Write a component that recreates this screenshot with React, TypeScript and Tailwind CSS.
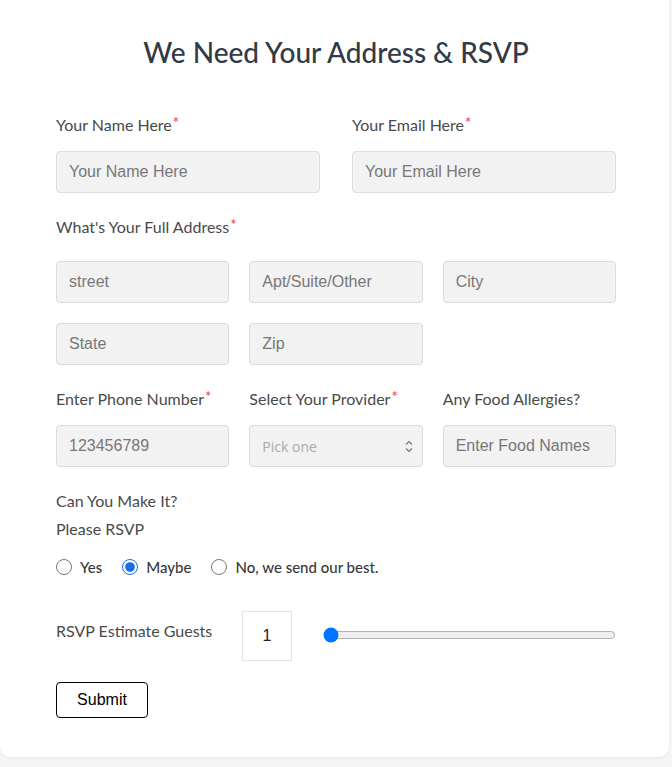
import { useState } from "react";

const inputCls =
  "h-[42px] w-full rounded-[4px] border border-[#dcdcdc] bg-[#f2f2f2] px-3 text-[16px] text-[#555] placeholder:text-[#777] outline-none font-['Liberation_Sans',Arial,sans-serif]";

function Label({ text, required }: { text: string; required?: boolean }) {
  return (
    <label className="block text-[16px] leading-[20px] text-[#4a4a4a] font-['Lato',sans-serif]">
      {text}
      {required && <sup className="relative -top-[3px] ml-[1px] text-[15px] text-[#e53935]">*</sup>}
    </label>
  );
}

export default function App() {
  const [rsvp, setRsvp] = useState("maybe");
  const [guests, setGuests] = useState(1);

  return (
    <div className="min-h-[767px] bg-[#f5f5f5] font-['Lato',sans-serif]">
      <div className="mr-[3px] rounded-b-[10px] bg-white pb-[39px] pl-[56px] pr-[53px] pt-[34px] shadow-[0_1px_3px_rgba(0,0,0,0.06)]">
        <h1 className="text-center text-[28px] font-medium leading-[36px] text-[#323a47]">
          We Need Your Address &amp; RSVP
        </h1>

        <div className="mt-[45px] grid grid-cols-2 gap-x-[32px]">
          <div>
            <Label text="Your Name Here" required />
            <input className={inputCls + " mt-[16px]"} placeholder="Your Name Here" />
          </div>
          <div>
            <Label text="Your Email Here" required />
            <input className={inputCls + " mt-[16px]"} placeholder="Your Email Here" />
          </div>
        </div>

        <div className="mt-[24px]">
          <Label text="What's Your Full Address" required />
          <div className="mt-[24px] grid grid-cols-3 gap-x-[20px] gap-y-[20px]">
            <input className={inputCls} placeholder="street" />
            <input className={inputCls} placeholder="Apt/Suite/Other" />
            <input className={inputCls} placeholder="City" />
            <input className={inputCls} placeholder="State" />
            <input className={inputCls} placeholder="Zip" />
          </div>
        </div>

        <div className="mt-[24px] grid grid-cols-3 gap-x-[20px]">
          <div>
            <Label text="Enter Phone Number" required />
            <input className={inputCls + " mt-[16px]"} placeholder="123456789" />
          </div>
          <div>
            <Label text="Select Your Provider" required />
            <div className="relative mt-[16px]">
              <select
                defaultValue=""
                className="h-[42px] w-full appearance-none rounded-[4px] border border-[#dcdcdc] bg-[#f2f2f2] px-3 text-[14px] text-[#aaa] outline-none font-['Open_Sans',sans-serif]"
              >
                <option value="" disabled>
                  Pick one
                </option>
                <option>AT&amp;T</option>
                <option>Verizon</option>
                <option>T-Mobile</option>
              </select>
              <svg
                className="pointer-events-none absolute right-[9px] top-[15px]"
                width="10"
                height="13"
                viewBox="0 0 10 13"
                fill="none"
                stroke="#777"
                strokeWidth="1.2"
              >
                <path d="M2 4.5 L5 1.5 L8 4.5" />
                <path d="M2 8.5 L5 11.5 L8 8.5" />
              </svg>
            </div>
          </div>
          <div>
            <Label text="Any Food Allergies?" />
            <input className={inputCls + " mt-[16px]"} placeholder="Enter Food Names" />
          </div>
        </div>

        <div className="mt-[20px] text-[16px] leading-[28px] text-[#4a4a4a]">
          <div>Can You Make It?</div>
          <div>Please RSVP</div>
        </div>

        <div className="mt-[13px] flex items-center gap-[20px] text-[15px] font-medium text-[#3a3a3a]">
          {[
            ["yes", "Yes"],
            ["maybe", "Maybe"],
            ["no", "No, we send our best."],
          ].map(([v, t]) => (
            <label key={v} className="flex items-center gap-[8px]">
              <input
                type="radio"
                name="rsvp"
                checked={rsvp === v}
                onChange={() => setRsvp(v)}
                className="m-0 h-[16px] w-[16px] accent-[#1a6be8]"
              />
              {t}
            </label>
          ))}
        </div>

        <div className="mt-[32px] flex items-start">
          <div className="mt-[10px] w-[186px] text-[16px] leading-[20px] text-[#4a4a4a]">RSVP Estimate Guests</div>
          <div className="flex h-[50px] w-[50px] items-center justify-center border border-[#e3e3e3] text-[16px] text-[#222] font-['Liberation_Sans',Arial,sans-serif]">
            {guests}
          </div>
          <input
            type="range"
            min={1}
            max={20}
            value={guests}
            onChange={(e) => setGuests(Number(e.target.value))}
            className="ml-[31px] mt-[16px] flex-1 accent-[#0075ff]"
          />
        </div>

        <button className="mt-[21px] h-[36px] w-[92px] rounded-[4px] border border-black bg-white text-[16px] text-black font-['Liberation_Sans',Arial,sans-serif]">
          Submit
        </button>
      </div>
    </div>
  );
}
